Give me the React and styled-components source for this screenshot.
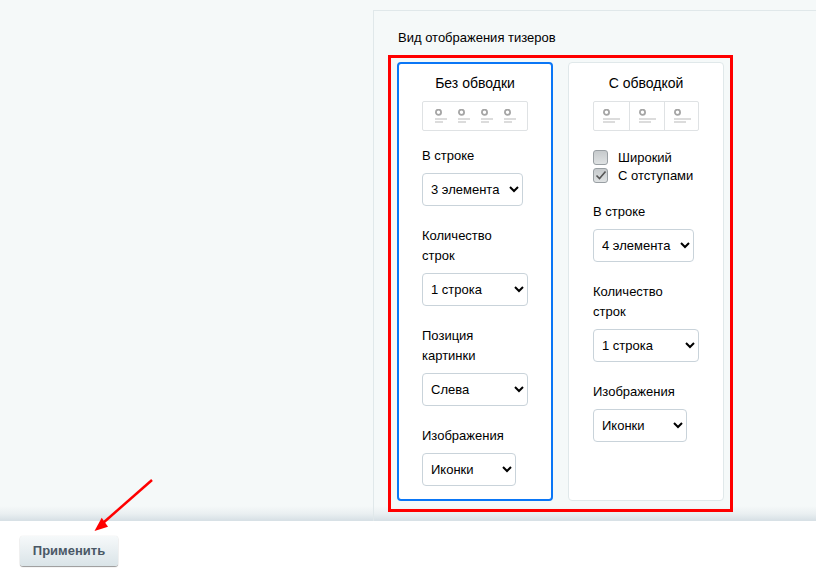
import React from 'react';
import styled, { createGlobalStyle } from 'styled-components';

const GlobalStyle = createGlobalStyle`
  html, body {
    margin: 0;
    padding: 0;
    background: #fff;
  }
  body {
    font-family: "Liberation Sans", Arial, sans-serif;
    color: #000;
  }
`;

function Preview({ count, bordered }) {
  return (
    <PreviewBox $bordered={bordered}>
      {Array.from({ length: count }).map((_, i) => (
        <PreviewCell key={i} $bordered={bordered} $divider={bordered && i > 0}>
          <svg width="18" height="15" viewBox="0 0 18 15" shapeRendering="crispEdges">
            <circle cx="3.5" cy="3.2" r="2.6" fill="none" stroke="#a5a5a5" strokeWidth="1.8" shapeRendering="auto" />
            <rect x="0" y="9" width={bordered ? 17 : 12} height="2" fill="#dcdcdc" />
            <rect x="0" y="12" width={bordered ? 12 : 8} height="2" fill="#dcdcdc" />
          </svg>
        </PreviewCell>
      ))}
    </PreviewBox>
  );
}

function Field({ label, width, value, options }) {
  return (
    <FieldWrap>
      <FieldLabel>{label}</FieldLabel>
      <Select $width={width} defaultValue={value}>
        {options.map((o) => (
          <option key={o}>{o}</option>
        ))}
      </Select>
    </FieldWrap>
  );
}

const perRow = ['3 элемента', '4 элемента'];
const rows = ['1 строка', '2 строки'];
const images = ['Иконки', 'Картинки'];

function App() {
  return (
    <Page>
      <GlobalStyle />
      <Content>
        <Sidebar />
        <Panel>
          <Title>Вид отображения тизеров</Title>
          <Highlight>
            <Card $active>
              <CardTitle>Без обводки</CardTitle>
              <Preview count={4} />
              <Field label="В строке" width={101} value="3 элемента" options={perRow} />
              <Field label="Количество строк" width={106} value="1 строка" options={rows} />
              <Field label="Позиция картинки" width={106} value="Слева" options={['Слева', 'Справа']} />
              <Field label="Изображения" width={94} value="Иконки" options={images} />
            </Card>
            <Card>
              <CardTitle>С обводкой</CardTitle>
              <Preview count={3} bordered />
              <Checks>
                <CheckRow>
                  <CheckBox />
                  Широкий
                </CheckRow>
                <CheckRow>
                  <CheckBox>
                    <svg width="12" height="12" viewBox="0 0 12 12">
                      <path d="M1.5 6.5 L4.5 9.5 L10.5 2.5" fill="none" stroke="#555" strokeWidth="1.6" />
                    </svg>
                  </CheckBox>
                  С отступами
                </CheckRow>
              </Checks>
              <Field label="В строке" width={101} value="4 элемента" options={perRow} />
              <Field label="Количество строк" width={106} value="1 строка" options={rows} />
              <Field label="Изображения" width={94} value="Иконки" options={images} />
            </Card>
          </Highlight>
        </Panel>
      </Content>
      <Footer>
        <ApplyButton>Применить</ApplyButton>
      </Footer>
      <Arrow width="70" height="60" viewBox="0 0 70 60">
        <line x1="59" y1="3" x2="10" y2="46" stroke="#f00" strokeWidth="2.5" />
        <polygon points="1.5,54 8.7,40.7 15,49.7" fill="#f00" />
      </Arrow>
    </Page>
  );
}

const Page = styled.div`
  position: relative;
  display: flex;
  flex-direction: column;
  width: 816px;
  height: 575px;
  overflow: hidden;
  background: #fff;
`;

const Content = styled.div`
  display: flex;
  height: 521px;
  background: linear-gradient(#f5f9f9 0, #f5f9f9 506px, #e9eff1 514px, #d8e1e6 520px);
`;

const Sidebar = styled.div`
  width: 373px;
  flex-shrink: 0;
`;

const Panel = styled.div`
  flex: 1;
  margin-top: 10px;
  padding: 19px 0 0 14px;
  border-top: 1px solid #e0e8ea;
  border-left: 1px solid #e0e8ea;
`;

const Title = styled.div`
  margin-left: 10px;
  font-size: 13px;
  line-height: 15px;
  color: #000;
`;

const Highlight = styled.div`
  display: flex;
  gap: 15px;
  box-sizing: border-box;
  width: 345px;
  height: 457px;
  margin-top: 10px;
  padding: 4px 0 0 6px;
  border: 3px solid #f00;
`;

const Card = styled.div`
  box-sizing: border-box;
  width: 156px;
  height: 439px;
  padding: ${(p) => (p.$active ? '11px 23px' : '12px 24px')};
  background: #fff;
  border: ${(p) => (p.$active ? '2px solid #0a76f6' : '1px solid #e0e8ea')};
  border-radius: 4px;
`;

const CardTitle = styled.div`
  font-size: 14px;
  line-height: 16px;
  text-align: center;
  color: #000;
`;

const PreviewBox = styled.div`
  display: flex;
  box-sizing: border-box;
  width: 106px;
  height: 30px;
  margin-top: 10px;
  margin-bottom: -5px;
  padding-left: ${(p) => (p.$bordered ? '0' : '12px')};
  background: #fff;
  border: 1px solid #dfe2e4;
  border-radius: 2px;
`;

const PreviewCell = styled.div`
  box-sizing: border-box;
  width: ${(p) => (p.$bordered ? '35px' : '23px')};
  flex-shrink: 0;
  padding: 7px 0 0 ${(p) => (p.$bordered ? '9px' : '0')};
  border-left: ${(p) => (p.$divider ? '1px solid #dfe2e4' : 'none')};
  svg {
    display: block;
  }
`;

const FieldWrap = styled.div`
  margin-top: 20px;
`;

const FieldLabel = styled.div`
  width: 90px;
  font-size: 13px;
  line-height: 20px;
  color: #000;
`;

const Select = styled.select`
  display: block;
  box-sizing: border-box;
  width: ${(p) => p.$width}px;
  height: 33px;
  margin-top: 7px;
  padding: 0 4px;
  font-family: "Liberation Sans", Arial, sans-serif;
  font-size: 13px;
  color: #000;
  background: #fff;
  border: 1px solid #c9d3da;
  border-radius: 4px;
`;

const Checks = styled.div`
  display: flex;
  flex-direction: column;
  gap: 2px;
  margin-top: 23px;
  margin-bottom: -1px;
`;

const CheckRow = styled.div`
  display: flex;
  align-items: center;
  gap: 10px;
  height: 16px;
  font-size: 13px;
  color: #000;
`;

const CheckBox = styled.span`
  display: flex;
  align-items: center;
  justify-content: center;
  box-sizing: border-box;
  width: 15px;
  height: 15px;
  background: linear-gradient(#c6cacc, #dfe2e3);
  border: 1px solid #999fa3;
  border-radius: 3px;
`;

const Footer = styled.div`
  flex: 1;
  padding: 15px 0 0 20px;
  background: #fff;
`;

const ApplyButton = styled.button`
  display: block;
  width: 98px;
  height: 30px;
  padding: 0 0 2px;
  font-family: "Liberation Sans", Arial, sans-serif;
  font-size: 13px;
  font-weight: bold;
  color: #4a5866;
  background: linear-gradient(#f6f9fa, #dae4e8);
  border: none;
  border-radius: 3px;
  box-shadow: 0 1px 1px rgba(0, 0, 0, 0.4), 0 0 1px rgba(0, 0, 0, 0.2);
`;

const Arrow = styled.svg`
  position: absolute;
  left: 93px;
  top: 477px;
`;

export default App;
